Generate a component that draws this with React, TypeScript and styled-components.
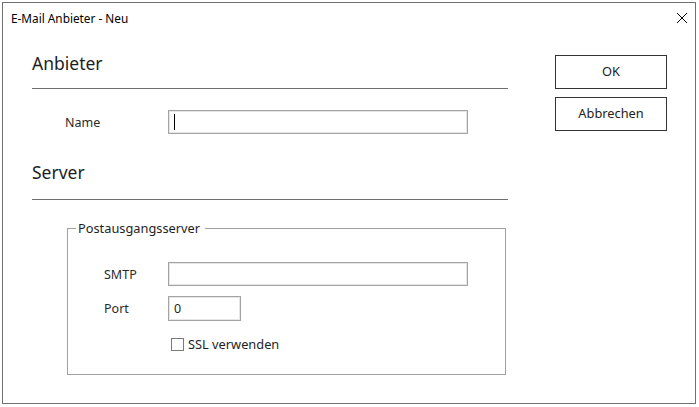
import React from "react";
import styled, { createGlobalStyle } from "styled-components";

const Global = createGlobalStyle`
  html, body { margin: 0; padding: 0; background: #ffffff; }
  body { font-family: "Noto Sans", "Open Sans", sans-serif; }
  * { box-sizing: border-box; }
`;

const Window = styled.div`
  margin: 2px 0 0 2px;
  width: 694px;
  height: 402px;
  border: 1px solid #707070;
  background: #ffffff;
  display: flex;
  flex-direction: column;
`;

const TitleBar = styled.div`
  height: 30px;
  display: flex;
  align-items: center;
  justify-content: space-between;
  padding: 0 7px 0 8px;
`;

const Title = styled.span`
  font-size: 11.8px;
  color: #000000;
`;

const CloseIcon = styled.svg`
  width: 12px;
  height: 12px;
`;

const Body = styled.div`
  flex: 1;
  display: flex;
  padding: 0 28px 0 29px;
`;

const Main = styled.div`
  width: 476px;
  display: flex;
  flex-direction: column;
`;

const Side = styled.div`
  margin-left: auto;
  padding-top: 22px;
  display: flex;
  flex-direction: column;
  gap: 8px;
`;

const Button = styled.button`
  width: 112px;
  height: 34px;
  border: 1px solid #333333;
  background: #ffffff;
  font-family: "Noto Sans", "Open Sans", sans-serif;
  font-size: 12.8px;
  color: #222222;
  padding: 0 0 3px 0;
`;

const SectionTitle = styled.div<{ $top: number }>`
  margin-top: ${(p) => p.$top}px;
  height: 24px;
  line-height: 24px;
  font-size: 17.5px;
  color: #1e1e1e;
`;

const Divider = styled.div<{ $top: number }>`
  margin-top: ${(p) => p.$top}px;
  height: 1px;
  background: #6e6e6e;
`;

const Row = styled.div<{ $top: number; $indent: number; $labelWidth: number }>`
  margin-top: ${(p) => p.$top}px;
  margin-left: ${(p) => p.$indent}px;
  display: grid;
  grid-template-columns: ${(p) => p.$labelWidth}px auto;
  align-items: center;
`;

const Label = styled.span`
  font-size: 12.5px;
  color: #2a2a2a;
`;

const TextBox = styled.div<{ $width: number; $height?: number }>`
  width: ${(p) => p.$width}px;
  height: ${(p) => p.$height ?? 24}px;
  border: 1px solid #a3a3a3;
  box-shadow: inset 0 0 0 1px #e6e6e6;
  background: #ffffff;
  display: flex;
  align-items: center;
  padding-left: 5px;
  font-size: 12.5px;
  color: #1e1e1e;
`;

const Caret = styled.span`
  display: block;
  width: 1px;
  height: 16px;
  background: #000000;
`;

const GroupBox = styled.fieldset`
  margin: 19px 0 0 35px;
  width: 439px;
  height: 156px;
  border: 1px solid #a0a0a0;
  padding: 0;
  min-width: 0;
`;

const Legend = styled.legend`
  margin-left: 8px;
  padding: 0 5px 0 2px;
  font-size: 12.8px;
  line-height: 18px;
  color: #1e1e1e;
`;

const CheckRow = styled.label`
  margin: 14px 0 0 103px;
  display: flex;
  align-items: center;
  gap: 4px;
  font-size: 12.8px;
  color: #1e1e1e;
`;

const CheckBox = styled.span`
  width: 13px;
  height: 13px;
  border: 1px solid #7a7a7a;
  background: #ffffff;
`;

export default function App() {
  return (
    <>
      <Global />
      <Window>
        <TitleBar>
          <Title>E-Mail Anbieter - Neu</Title>
          <CloseIcon viewBox="0 0 12 12">
            <path d="M1 1 L11 11 M11 1 L1 11" stroke="#000" strokeWidth="1" fill="none" />
          </CloseIcon>
        </TitleBar>
        <Body>
          <Main>
            <SectionTitle $top={18}>Anbieter</SectionTitle>
            <Divider $top={13} />
            <Row $top={21} $indent={33} $labelWidth={103}>
              <Label>Name</Label>
              <TextBox $width={300}>
                <Caret />
              </TextBox>
            </Row>
            <SectionTitle $top={26}>Server</SectionTitle>
            <Divider $top={15} />
            <GroupBox>
              <Legend>Postausgangsserver</Legend>
              <Row $top={25} $indent={36} $labelWidth={64}>
                <Label>SMTP</Label>
                <TextBox $width={300} />
              </Row>
              <Row $top={10} $indent={36} $labelWidth={64}>
                <Label>Port</Label>
                <TextBox $width={73} $height={25}>0</TextBox>
              </Row>
              <CheckRow>
                <CheckBox />
                SSL verwenden
              </CheckRow>
            </GroupBox>
          </Main>
          <Side>
            <Button>OK</Button>
            <Button>Abbrechen</Button>
          </Side>
        </Body>
      </Window>
    </>
  );
}
